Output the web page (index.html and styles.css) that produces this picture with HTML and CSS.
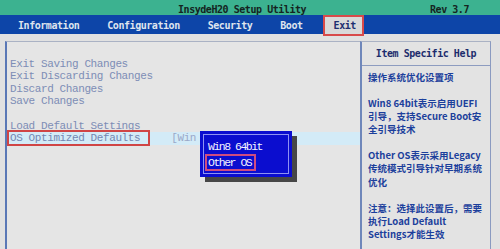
FILE: index.html
```html
<!DOCTYPE html>
<html lang="zh-CN">
<head>
    <meta charset="UTF-8">
    <meta name="viewport" content="width=device-width, initial-scale=1.0">
    <title>InsydeH20 Setup Utility</title>
    <link rel="stylesheet" href="styles.css">
</head>
<body>
    <div class="titlebar">
        <span class="title">InsydeH20 Setup Utility</span>
        <span class="rev">Rev 3.7</span>
    </div>
    <div class="menubar">
        <span class="tab">Information</span>
        <span class="tab">Configuration</span>
        <span class="tab">Security</span>
        <span class="tab">Boot</span>
        <span class="tab active">Exit</span>
    </div>

    <div class="main">
        <div class="options">
            <div class="row">Exit Saving Changes</div>
            <div class="row">Exit Discarding Changes</div>
            <div class="row">Discard Changes</div>
            <div class="row">Save Changes</div>
            <div class="row">&nbsp;</div>
            <div class="row">Load Default Settings</div>
            <div class="row selected"><span class="label">OS Optimized Defaults</span><span class="value">[Win</span></div>

            <div class="popup">
                <div class="popup-inner">
                    <div class="choice">Win8 64bit</div>
                    <div class="choice"><span class="picked">Other OS</span></div>
                </div>
            </div>
        </div>

        <div class="help">
            <div class="help-title">Item Specific Help</div>
            <div class="help-body">
                <p>操作系统优化设置项</p>
                <p>Win8 64bit表示启用UEFI<br>引导，支持Secure Boot安<br>全引导技术</p>
                <p>Other OS表示采用Legacy<br>传统模式引导针对早期系统<br>优化</p>
                <p>注意：选择此设置后，需要<br>执行Load Default<br>Settings才能生效</p>
            </div>
        </div>
    </div>
</body>
</html>
```

FILE: styles.css
```css
body {
    margin: 0;
    width: 500px;
    height: 249px;
    overflow: hidden;
    background-color: #e1e1e1;
}
.titlebar {
    display: flex;
    height: 15px;
    box-sizing: border-box;
    padding: 5px 31px 0 178px;
    line-height: 10px;
    background-color: #3cb290;
    color: #14241f;
    font-family: "DejaVu Sans Mono", monospace;
    font-size: 10px;
    font-weight: bold;
    letter-spacing: -0.45px;
}
.title, .rev, .tab {
    white-space: pre;
}
.rev {
    margin-left: auto;
}
.menubar {
    display: flex;
    align-items: flex-start;
    gap: 28px;
    height: 19px;
    padding-left: 18px;
    background-color: #0d45a8;
    font-family: "DejaVu Sans Mono", monospace;
    font-size: 10px;
    font-weight: bold;
    letter-spacing: -0.45px;
}
.tab {
    padding-top: 1px;
    line-height: 19px;
    color: #dfe4ee;
}
.tab.active {
    margin-left: -8px;
    padding: 0 6px 0 9px;
    line-height: 17px;
    border: 2px solid #d84a4a;
    background-color: #d9d9d9;
    color: #1d2f70;
}
.main {
    display: flex;
    height: 215px;
    padding: 7px 8px 0 5px;
}
.options {
    position: relative;
    width: 355px;
    box-sizing: border-box;
    padding: 16px 0 0 3px;
    border-top: 1px solid #aab2c4;
    border-left: 2px solid #5a78b6;
    background-color: #e5e5e5;
    font-family: "Liberation Mono", monospace;
    font-size: 11px;
    letter-spacing: -0.4px;
    color: #7d8db6;
}
.row {
    height: 12.4px;
    line-height: 12.4px;
    white-space: pre;
}
.selected {
    margin-left: -3px;
    padding-left: 3px;
    background-color: #d3ebf7;
}
.label {
    margin-left: -3px;
    padding: 0 8px 0 1px;
    border: 2px solid #d04545;
    color: #7386b2;
}
.value {
    margin-left: 21px;
    color: #9aa8c8;
}
.popup {
    position: absolute;
    left: 193px;
    top: 89px;
    width: 92px;
    padding: 3px;
    box-sizing: border-box;
    background-color: #0b0dcf;
    box-shadow: 5px 5px 0 #474747;
}
.popup-inner {
    height: 40px;
    box-sizing: border-box;
    padding: 4px 0 0 4px;
    border: 1px solid #8f92f2;
    font-size: 11.5px;
    letter-spacing: -1.5px;
    color: #f2f2ff;
}
.choice {
    line-height: 16px;
    white-space: pre;
}
.picked {
    margin-left: -3px;
    padding: 0 3px 0 1px;
    border: 2px solid #cf4c80;
}
.help {
    width: 131px;
    box-sizing: border-box;
    border-top: 1px solid #aab2c4;
    border-left: 2px solid #6f87ba;
    border-right: 1px solid #8a9ac0;
    background-color: #e3e3e3;
}
.help-title {
    padding-top: 1px;
    line-height: 22px;
    text-align: center;
    border-bottom: 1px solid #8d9cc0;
    font-family: "DejaVu Sans Mono", monospace;
    font-size: 10px;
    font-weight: bold;
    letter-spacing: -0.45px;
    color: #1c2c6c;
}
.help-body {
    padding: 5px 0 0 6px;
    font-family: "Noto Sans CJK SC", sans-serif;
    font-size: 9.5px;
    font-weight: bold;
    line-height: 13.3px;
    color: #1c3f9c;
    white-space: nowrap;
}
.help-body p {
    margin: 0 0 12.5px;
}
```
